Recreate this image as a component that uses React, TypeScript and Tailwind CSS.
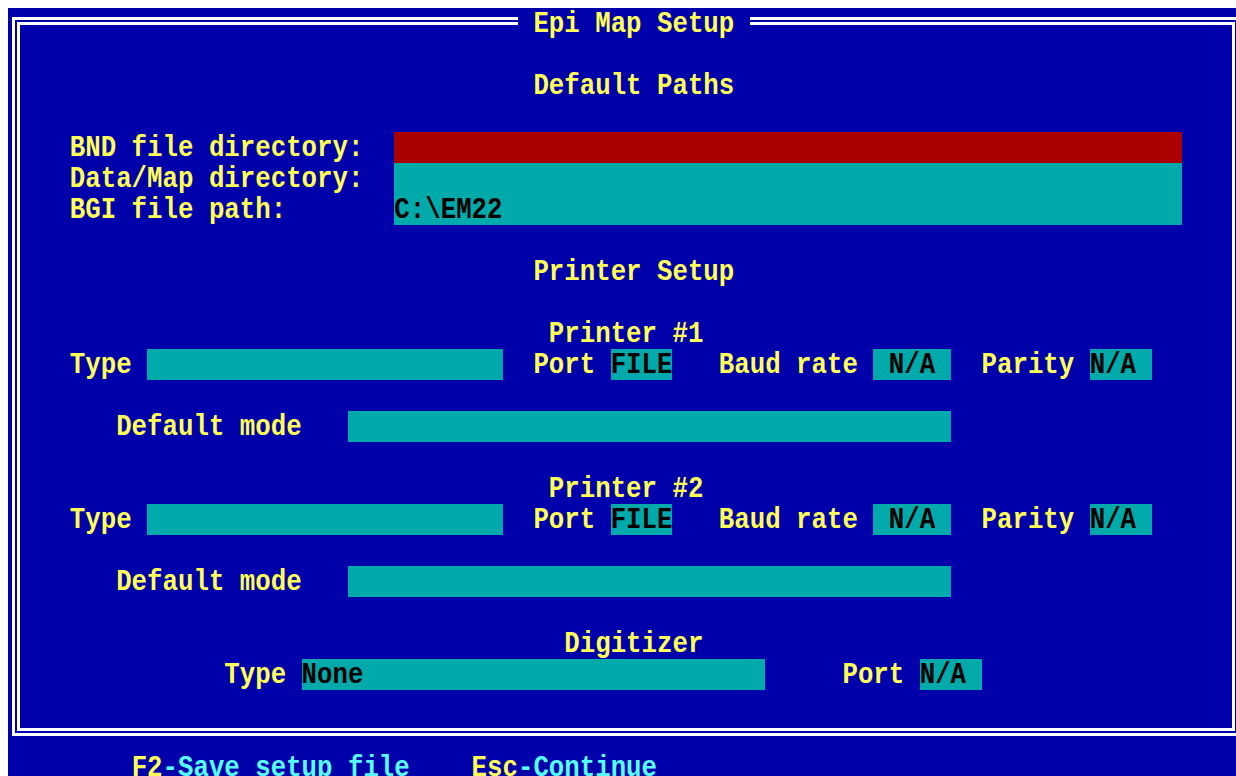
import React from "react";
import clsx from "clsx";

// text-mode colours (CGA/VGA palette)
const YELLOW = "text-[#ffff55]";
const CYAN = "text-[#55ffff]";
const FIELD = "bg-[#00aaaa] text-black";
const ACTIVE = "bg-[#aa0000] text-black";

type Seg = { col: number; text: string; cls?: string; width?: number };

// one 80-column text row; segments are placed at their column by padding with spaces
const Line = ({ segs = [] }: { segs?: Seg[] }) => {
  let at = 0;
  const out: React.ReactNode[] = [];
  segs.forEach((s, i) => {
    if (s.col > at) out.push(<span key={`gap${i}`}>{" ".repeat(s.col - at)}</span>);
    const t = s.width ? s.text.padEnd(s.width) : s.text;
    out.push(
      <span key={i} className={clsx("inline-block h-[31px] align-top", s.cls)}>
        {/* VGA glyphs are taller than the mono font's */}
        <span className="inline-block scale-y-[1.16] translate-y-[1px]">{t}</span>
      </span>
    );
    at = s.col + t.length;
  });
  return <div className="h-[31px] leading-[31px] whitespace-pre">{out}</div>;
};

const printerRow: Seg[] = [
  { col: 4, text: "Type", cls: YELLOW },
  { col: 9, text: "", cls: FIELD, width: 23 },
  { col: 34, text: "Port", cls: YELLOW },
  { col: 39, text: "FILE", cls: FIELD, width: 4 },
  { col: 46, text: "Baud rate", cls: YELLOW },
  { col: 56, text: " N/A", cls: FIELD, width: 5 },
  { col: 63, text: "Parity", cls: YELLOW },
  { col: 70, text: "N/A", cls: FIELD, width: 4 },
];

const modeRow: Seg[] = [
  { col: 7, text: "Default mode", cls: YELLOW },
  { col: 22, text: "", cls: FIELD, width: 39 },
];

const rows: Seg[][] = [
  [{ col: 33, text: " Epi Map Setup ", cls: clsx("bg-[#0000aa]", YELLOW) }],
  [],
  [{ col: 34, text: "Default Paths", cls: YELLOW }],
  [],
  [
    { col: 4, text: "BND file directory:", cls: YELLOW },
    { col: 25, text: "", cls: ACTIVE, width: 51 },
  ],
  [
    { col: 4, text: "Data/Map directory:", cls: YELLOW },
    { col: 25, text: "", cls: FIELD, width: 51 },
  ],
  [
    { col: 4, text: "BGI file path:", cls: YELLOW },
    { col: 25, text: "C:\\EM22", cls: FIELD, width: 51 },
  ],
  [],
  [{ col: 34, text: "Printer Setup", cls: YELLOW }],
  [],
  [{ col: 35, text: "Printer #1", cls: YELLOW }],
  printerRow,
  [],
  modeRow,
  [],
  [{ col: 35, text: "Printer #2", cls: YELLOW }],
  printerRow,
  [],
  modeRow,
  [],
  [{ col: 36, text: "Digitizer", cls: YELLOW }],
  [
    { col: 14, text: "Type", cls: YELLOW },
    { col: 19, text: "None", cls: FIELD, width: 30 },
    { col: 54, text: "Port", cls: YELLOW },
    { col: 59, text: "N/A", cls: FIELD, width: 4 },
  ],
];

const footer: Seg[] = [
  { col: 8, text: "F2", cls: YELLOW },
  { col: 10, text: "-Save setup file", cls: CYAN },
  { col: 30, text: "Esc", cls: YELLOW },
  { col: 33, text: "-Continue", cls: CYAN },
];

export default function App() {
  return (
    <div className="w-[1236px] h-[776px] bg-white pt-[8px] pl-[8px] overflow-hidden">
      <div className="w-[1236px] h-[775px] bg-[#0000aa] overflow-hidden font-['Liberation_Mono',monospace] font-bold text-[25.75px]">
        <div className="h-[744px] pt-[9px] pl-[4px]">
          <div className="w-[1228px] h-[719px] border-[8px] border-double border-white">
            <div className="-ml-[12px] -mt-[17px]">
              {rows.map((r, i) => (
                <Line key={i} segs={r} />
              ))}
            </div>
          </div>
        </div>
        <Line segs={footer} />
      </div>
    </div>
  );
}
